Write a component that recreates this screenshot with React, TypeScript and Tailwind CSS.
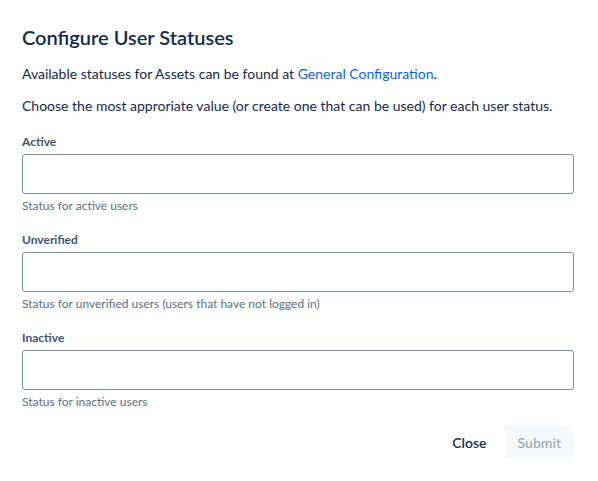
export default function App() {
  const fields = [
    { label: "Active", help: "Status for active users" },
    { label: "Unverified", help: "Status for unverified users (users that have not logged in)" },
    { label: "Inactive", help: "Status for inactive users" },
  ];

  return (
    <div
      className="min-h-[481px] w-[598px] bg-white px-[22px] pt-[24px] text-[#172b4d]"
      style={{ fontFamily: '"Segoe UI", Lato, sans-serif' }}
    >
      <h1 className="text-[20px] font-semibold leading-[26px] text-[#172b4d]">Configure User Statuses</h1>

      <p className="mt-[14px] text-[14px] leading-[20px]">
        Available statuses for Assets can be found at{" "}
        <a href="#" className="text-[#0c66e4]">
          General Configuration
        </a>
        .
      </p>
      <p className="mt-[12px] text-[14px] leading-[20px]">
        Choose the most approriate value (or create one that can be used) for each user status.
      </p>

      <div className="mt-[18px] flex flex-col gap-[18px]">
        {fields.map((f) => (
          <div key={f.label} className="flex flex-col">
            <label className="text-[12px] font-bold leading-[16px] text-[#44546f]">{f.label}</label>
            <input
              type="text"
              className="mt-[4px] h-[40px] w-[552px] rounded-[3px] border border-[#8590a2] bg-white px-2 text-[14px] outline-none"
            />
            <span className="mt-[4px] text-[12px] leading-[16px] text-[#626f86]">{f.help}</span>
          </div>
        ))}
      </div>

      <div className="mt-[16px] flex w-[552px] items-center justify-end gap-[6px]">
        <button className="h-[32px] rounded-[3px] px-[12px] text-[14px] font-semibold text-[#172b4d]">Close</button>
        <button
          disabled
          className="h-[32px] rounded-[3px] bg-[#f7f8f9] px-[13px] text-[14px] font-semibold text-[#a5adba]"
        >
          Submit
        </button>
      </div>
    </div>
  );
}
